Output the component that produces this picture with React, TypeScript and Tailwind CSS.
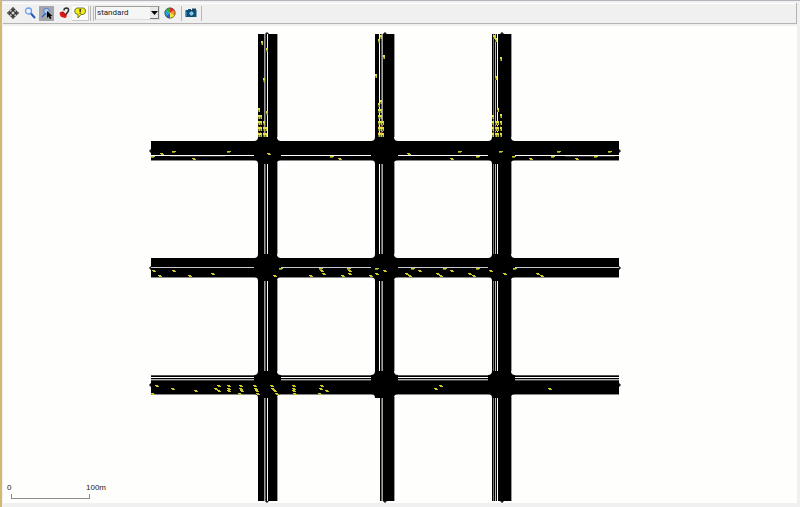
import { useState, type ReactNode } from "react";

type Point = [number, number];

const ROAD_X = [258, 375, 492];
const ROAD_Y = [141, 258, 375];
const H_SPANS = [
  [151, 254],
  [280, 371],
  [397, 488],
  [514, 619],
];
const V_SPANS = [
  [34, 137],
  [163, 254],
  [280, 371],
  [397, 501],
];

const V_LINES = [
  { x: 264, fill: "#999999" },
  { x: 265, fill: "#555555" },
  { x: 267, fill: "#ffffff" },
  { x: 379, fill: "#ffffff" },
  { x: 381, fill: "#666666" },
  { x: 382, fill: "#a0a0a0" },
  { x: 493, fill: "#777777" },
  { x: 495, fill: "#bbbbbb" },
  { x: 497, fill: "#ffffff" },
];

const H_LINES = [
  { y: 155, fill: "#ffffff" },
  { y: 267, fill: "#c8c8c8" },
  { y: 375, fill: "#555555" },
  { y: 377, fill: "#ffffff" },
  { y: 379, fill: "#b0b0b0" },
  { y: 380, fill: "#444444" },
];

const EASTBOUND: Point[] = [
  [162, 154], [194, 159], [269, 154], [340, 159], [409, 154], [452, 159], [531, 159], [577, 159],
  [154, 271], [174, 271], [160, 276], [190, 276], [213, 274], [275, 276], [311, 276], [322, 271],
  [324, 274], [350, 271], [350, 274], [343, 276], [371, 276], [377, 274], [385, 271], [420, 271],
  [407, 274], [410, 276], [452, 271], [438, 274], [441, 276], [470, 274], [474, 276], [491, 271],
  [505, 274], [538, 274], [542, 276],
  [157, 386], [173, 389], [153, 394], [196, 391], [219, 386], [216, 389], [219, 391], [229, 386],
  [229, 389], [229, 391], [241, 386], [241, 389], [242, 391], [240, 394], [255, 386], [256, 389],
  [257, 391], [258, 394], [272, 386], [273, 389], [275, 391], [277, 394], [294, 386], [294, 389],
  [294, 391], [295, 394], [322, 386], [321, 389], [327, 391], [320, 394], [441, 386], [436, 389],
  [550, 389],
];

const WESTBOUND: Point[] = [
  [174, 152], [229, 152], [153, 157], [332, 157], [460, 152], [478, 157], [501, 152], [514, 157],
  [553, 157], [559, 152], [596, 157], [610, 152], [281, 269], [321, 269], [349, 269], [377, 269],
  [413, 269], [445, 269], [478, 269], [515, 269],
];

const SOUTHBOUND: Point[] = [
  [261, 43], [266, 50], [263, 80], [258, 110], [266, 113],
  [258, 117], [260, 117],
  [258, 123], [260, 123], [263, 123],
  [258, 129], [260, 129], [263, 129], [265, 129],
  [258, 135], [260, 135], [263, 135], [265, 135],
  [380, 37], [378, 41], [383, 57], [375, 76], [380, 102], [378, 105],
  [378, 111], [380, 111], [378, 117], [380, 117],
  [378, 123], [380, 123], [382, 123],
  [378, 129], [380, 129], [382, 129],
  [378, 135], [380, 135], [382, 135],
  [493, 37], [495, 40], [500, 59], [495, 78], [497, 110], [492, 117], [500, 116],
  [492, 123], [495, 123], [497, 123], [500, 123],
  [492, 129], [495, 129], [497, 129], [500, 129],
  [492, 135], [495, 135], [497, 135], [500, 135],
];

const ENDPOINTS: Point[] = [
  [267, 34], [385, 34], [502, 34], [267, 501], [385, 501], [502, 501],
  [151, 151], [151, 268], [151, 385], [619, 151], [619, 268], [619, 385],
];

function RoadNetwork() {
  return (
    <svg
      className="absolute inset-0 size-full"
      viewBox="3 26 794 477"
      role="img"
      aria-label="Road network"
    >
      {ENDPOINTS.map(([x, y]) => (
        <circle key={`${x}-${y}`} cx={x} cy={y} r={1.2} fill="#555" stroke="#000" />
      ))}
      <g shapeRendering="crispEdges">
        {ROAD_Y.map((y) => (
          <g key={y}>
            <rect x={151} y={y} width={468} height={20} fill="#888" />
            <rect x={151} y={y} width={468} height={19} fill="#000" />
          </g>
        ))}
        {ROAD_X.map((x) =>
          V_SPANS.map(([from, to]) => {
            const narrow = x === 375 && from === 397;
            const left = narrow ? 380 : x;
            return (
              <g key={`${x}-${from}`}>
                <rect x={left} y={from} width={x + 20 - left} height={to - from} fill="#999" />
                <rect x={left} y={from} width={x + 19 - left} height={to - from} fill="#000" />
              </g>
            );
          }),
        )}
        {V_LINES.map(({ x, fill }) =>
          V_SPANS.filter(([from]) => !(x === 379 && from === 397)).map(([from, to]) => (
            <rect key={`${x}-${from}`} x={x} y={from} width={1} height={to - from} fill={fill} />
          )),
        )}
        {H_LINES.map(({ y, fill }) =>
          H_SPANS.map(([from, to]) => (
            <rect key={`${y}-${from}`} x={from} y={y} width={to - from} height={1} fill={fill} />
          )),
        )}
        <rect x={170} y={156} width={55} height={1} fill="#333" />
        <rect x={565} y={156} width={50} height={1} fill="#333" />
      </g>
      {ROAD_X.map((x) =>
        ROAD_Y.map((y) => (
          <path
            key={`${x}-${y}`}
            transform={`translate(${x} ${y})`}
            d="M0 -4H19Q19 0 23 0V19Q19 19 19 23H0Q0 19 -4 19V0Q0 0 0 -4Z"
            fill="#000"
          />
        )),
      )}
      <g shapeRendering="crispEdges">
        {EASTBOUND.map(([x, y]) => (
          <g key={`${x}-${y}`}>
            <rect x={x - 2} y={y - 1} width={3} height={1} fill="#cfcf2c" />
            <rect x={x - 1} y={y} width={3} height={1} fill="#c4c428" />
          </g>
        ))}
        {WESTBOUND.map(([x, y]) => (
          <g key={`${x}-${y}`}>
            <rect x={x - 2} y={y - 1} width={4} height={1} fill="#c8c828" />
            <rect x={x - 2} y={y} width={3} height={1} fill="#84841c" />
          </g>
        ))}
        {SOUTHBOUND.map(([x, y]) => (
          <g key={`${x}-${y}`}>
            <rect x={x} y={y - 2} width={2} height={2} fill="#dede4a" />
            <rect x={x + 1} y={y} width={1} height={2} fill="#c5c53c" />
            <rect x={x} y={y} width={1} height={2} fill="#66661c" />
            {y >= 129 && <rect x={x} y={y - 3} width={1} height={1} fill="#7c3418" />}
          </g>
        ))}
      </g>
    </svg>
  );
}

function ToolButton({ label, tone = "", children }: { label: string; tone?: string; children: ReactNode }) {
  return (
    <button
      type="button"
      aria-label={label}
      className={`flex h-[15px] w-[17px] items-center justify-center ${tone}`}
    >
      <svg viewBox="0 0 12 12" className="size-3" fill="none">
        {children}
      </svg>
    </button>
  );
}

function Separator() {
  return <div className="h-[15px] w-px bg-[#b8b8b8]" />;
}

const WHEEL = [
  { fill: "#ef2b20", rotate: 0 },
  { fill: "#f7931b", rotate: 60 },
  { fill: "#f0e526", rotate: 120 },
  { fill: "#2b64df", rotate: 180 },
  { fill: "#20a0c8", rotate: 240 },
  { fill: "#20b93b", rotate: 300 },
];

function Toolbar() {
  const [scheme, setScheme] = useState("standard");
  return (
    <div
      role="toolbar"
      className="mt-px flex h-[21px] items-center border-r border-b border-[#b4b4b4] bg-[#f0f0f1] pl-px shadow-[inset_0_1px_#fff]"
    >
      <ToolButton label="Recenter view">
        <path d="M6 .3 8.300 3H3.700ZM6 11.700 3.700 9H8.300ZM.3 6 3 3.700V8.300ZM11.700 6 9 8.300V3.700Z" fill="#777" stroke="#222" strokeWidth=".8" />
        <path d="M6 2.500V9.500M2.500 6H9.500" stroke="#222" strokeWidth="1.600" />
        <circle cx="6" cy="6" r="2" fill="#ddd" stroke="#222" strokeWidth=".9" />
      </ToolButton>
      <ToolButton label="Zoom">
        <path d="M7 6.500 10.500 10.500" stroke="#2857b8" strokeWidth="2" strokeLinecap="round" />
        <circle cx="4.500" cy="4" r="3" fill="#eaf4ff" stroke="#6a9bec" strokeWidth="1.300" />
      </ToolButton>
      <ToolButton label="Select objects" tone="bg-[#a4a6aa] bg-clip-content px-px">
        <path d="M1 10 5 6" stroke="#2e64c8" strokeWidth="1.500" />
        <circle cx="5.500" cy="4" r="2.800" fill="#b4c8e2" stroke="#4b7fd8" />
        <path d="M6 4V11L7.600 9.600 9 12 10.500 11.200 9.300 9H11.500Z" fill="#000" />
      </ToolButton>
      <ToolButton label="Locate vehicle">
        <path d="M6 3.500Q6 1 8.500 1Q11 1.200 10.500 3.500Q10 5 8.500 6.500V7.500" stroke="#333" strokeWidth="1.600" />
        <path d="M1.500 6Q2.500 4 5 4.500L7.500 6.500Q9.500 8 8.500 10Q7 11.500 5.500 10.500Q2 10.500 1.500 6Z" fill="#e31616" />
        <path d="M4 6 5.500 5.500M6.500 8 8.500 7.500" stroke="#701010" />
      </ToolButton>
      <ToolButton label="Show tooltips" tone="bg-[#fafafa] border-r border-b border-[#c8c8c8]">
        <path d="M3 1H9.500Q11.500 1.500 11.500 4Q11.500 7 9 7.500H7L4 11V7.500Q.7 7 .7 4Q.7 1.500 3 1Z" fill="#f2ee12" stroke="#55551a" strokeWidth=".8" />
        <path d="M6.200 2V5" stroke="#333" strokeWidth="1.500" />
        <path d="M6.200 5.700V6.700" stroke="#333" strokeWidth="1.500" />
      </ToolButton>
      <div className="flex gap-0.5 px-px">
        <Separator />
        <Separator />
      </div>
      <div className="relative">
        <select
          aria-label="Color scheme"
          value={scheme}
          onChange={(event) => setScheme(event.target.value)}
          className="block h-[14px] w-[65px] appearance-none border border-[#a0a0a0] border-r-[#ddd] border-b-[#ddd] bg-[#f6f6f6] pl-px font-[Roboto,sans-serif] text-[8px] leading-3 text-[#222]"
        >
          <option>standard</option>
          <option>real world</option>
        </select>
        <span className="pointer-events-none absolute top-px right-px flex h-3 w-[9px] items-center justify-center border-r border-b border-[#777] bg-[#e8e8e8]">
          <svg viewBox="0 0 7 4" className="h-1 w-[7px]">
            <path d="M0 0H7L3.500 4Z" fill="#000" />
          </svg>
        </span>
      </div>
      <div className="pr-[3px] pl-px">
        <ToolButton label="Edit coloring schemes">
          {WHEEL.map(({ fill, rotate }) => (
            <path key={rotate} d="M6 6V.700A5.300 5.300 0 0 1 10.590 3.350Z" fill={fill} transform={`rotate(${rotate} 6 6)`} />
          ))}
          <circle cx="6" cy="6" r="5.200" stroke="#333" strokeWidth=".6" />
        </ToolButton>
      </div>
      <Separator />
      <div className="pr-0.5">
        <ToolButton label="Make snapshot">
          <path d="M.5 3H3V2H6V3H11.500V10H.5Z" fill="#10537c" />
          <path d="M7 1.500H11V3.500H7Z" fill="#164362" />
          <circle cx="6.500" cy="6.500" r="2.700" fill="#78c8f2" stroke="#0b2942" />
          <path d="M1 5V9" stroke="#3b9dd2" />
        </ToolButton>
      </div>
      <Separator />
    </div>
  );
}

function ScaleBar() {
  return (
    <div className="absolute bottom-1 left-1 font-['Liberation_Sans',sans-serif] text-[8px] leading-2 text-[#222]">
      <div className="flex w-[99px] justify-between">
        <span>0</span>
        <span>100m</span>
      </div>
      <div className="mt-0.5 ml-1 h-[5px] w-[79px] border-x border-b border-[#8c8c8c]" />
    </div>
  );
}

export default function App() {
  return (
    <div className="flex h-screen flex-col border-t border-l-2 border-t-[#b4b4bc] border-l-[#d3b96f] bg-[#f0f0f0] pt-px pr-[3px] pb-1 pl-px">
      <Toolbar />
      <main className="relative mt-0.5 min-h-0 flex-1 bg-[#fefefd]">
        <RoadNetwork />
        <ScaleBar />
      </main>
    </div>
  );
}
